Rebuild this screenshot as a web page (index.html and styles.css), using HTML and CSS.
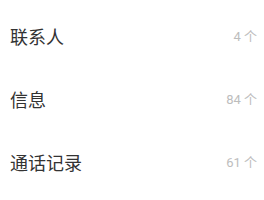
FILE: index.html
```html
<!DOCTYPE html>
<html lang="zh-CN">
<head>
    <meta charset="UTF-8">
    <meta name="viewport" content="width=device-width, initial-scale=1.0">
    <title>分类</title>
    <link rel="stylesheet" href="styles.css">
</head>
<body>
    <ul class="category-list">
        <li class="category-item">
            <span class="category-name">联系人</span>
            <span class="category-count">4 个</span>
        </li>
        <li class="category-item">
            <span class="category-name">信息</span>
            <span class="category-count">84 个</span>
        </li>
        <li class="category-item">
            <span class="category-name">通话记录</span>
            <span class="category-count">61 个</span>
        </li>
    </ul>
</body>
</html>
```

FILE: styles.css
```css
body {
    margin: 0;
    background: #fff;
    font-family: Roboto, "Noto Sans CJK SC", sans-serif;
}

.category-list {
    list-style: none;
    margin: 0;
    padding: 4px 7px 0 10px;
}

.category-item {
    display: flex;
    justify-content: space-between;
    align-items: center;
    height: 63px;
}

.category-name {
    font-size: 18px;
    color: #333;
}

.category-count {
    font-size: 13px;
    color: #bdbdbd;
}
```
